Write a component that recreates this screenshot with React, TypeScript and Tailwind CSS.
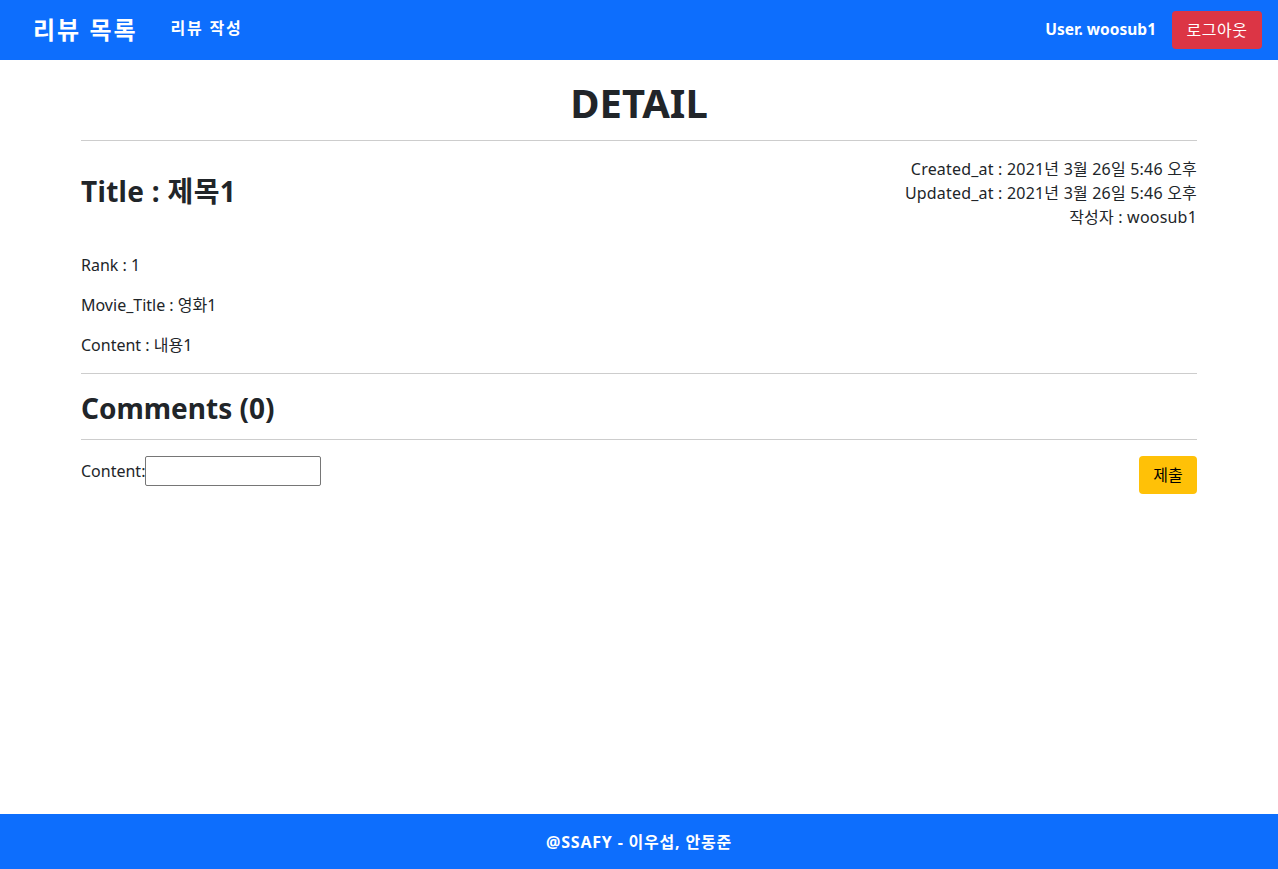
import React from "react";

export default function App() {
  const font = { fontFamily: '"Noto Sans", "Noto Sans CJK KR", sans-serif' };
  return (
    <div
      className="min-h-screen flex flex-col bg-white text-[#212529] font-['Noto_Sans','Noto_Sans_CJK_KR',sans-serif]"
      style={font}
    >
      <nav className="h-[60px] bg-[#0d6efd] flex items-center justify-between pl-[33px] pr-[16px] shrink-0">
        <div className="flex items-center">
          <span className="text-white font-bold text-[24px] tracking-[2px] leading-none">리뷰 목록</span>
          <span className="text-white font-bold text-[16px] tracking-[1.8px] ml-[33px] leading-none -mt-[5px]">리뷰 작성</span>
        </div>
        <div className="flex items-center">
          <span className="text-white font-bold text-[15.5px] mr-[16px]">User. woosub1</span>
          <button className="bg-[#dc3545] text-white text-[16px] tracking-[0.5px] rounded-[4px] h-[38px] w-[90px] flex items-center justify-center">
            로그아웃
          </button>
        </div>
      </nav>

      <main className="w-[1116px] mx-auto flex flex-col">
        <h1 className="text-[40px] font-bold text-center leading-[48px] mt-[19px]">DETAIL</h1>
        <hr className="border-0 h-px bg-[#cdcdcd] mt-[13px]" />

        <div className="flex items-center justify-between mt-[16px]">
          <h3 className="text-[28px] font-bold leading-[34px] -mt-[4px] tracking-[0.3px]">Title : 제목1</h3>
          <div className="text-right text-[16px] leading-[24px] tracking-[0.2px]">
            <div>Created_at : 2021년 3월 26일 5:46 오후</div>
            <div>Updated_at : 2021년 3월 26일 5:46 오후</div>
            <div>작성자 : woosub1</div>
          </div>
        </div>

        <div className="mt-[24px] flex flex-col gap-[16px] text-[16px] leading-[24px]">
          <p>Rank : 1</p>
          <p>Movie_Title : 영화1</p>
          <p>Content : 내용1</p>
        </div>

        <hr className="border-0 h-px bg-[#cdcdcd] mt-[16px]" />
        <h3 className="text-[28px] font-bold leading-[34px] mt-[17px]">Comments (0)</h3>
        <hr className="border-0 h-px bg-[#cdcdcd] mt-[14px]" />

        <form className="flex justify-between items-start mt-[16px]" onSubmit={(e) => e.preventDefault()}>
          <label className="flex items-center text-[16px] leading-[24px] h-[30px]">
            Content:
            <input
              type="text"
              className="w-[176px] h-[30px] border border-[#767676] rounded-[2px] px-1 outline-none"
            />
          </label>
          <button className="bg-[#ffc107] text-black text-[16px] rounded-[4px] h-[38px] w-[58px] flex items-center justify-center">
            제출
          </button>
        </form>
      </main>

      <footer className="mt-auto h-[55px] bg-[#0d6efd] flex items-center justify-center shrink-0">
        <span className="text-white font-bold text-[16px] tracking-[0.8px]">@SSAFY - 이우섭, 안동준</span>
      </footer>
    </div>
  );
}
